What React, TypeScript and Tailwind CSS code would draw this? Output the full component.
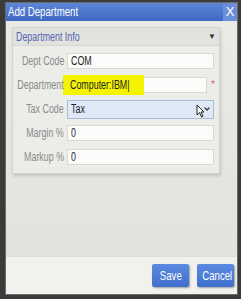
import { ChevronDown } from 'lucide-react'

const font = { fontFamily: '"Liberation Sans", Arial, sans-serif' }

type Field = { label: string; value: string; kind?: 'select' | 'highlight'; required?: boolean }

const fields: Field[] = [
  { label: 'Dept Code', value: 'COM' },
  { label: 'Department', value: 'Computer:IBM', kind: 'highlight', required: true },
  { label: 'Tax Code', value: 'Tax', kind: 'select' },
  { label: 'Margin %', value: '0' },
  { label: 'Markup %', value: '0' },
]

// the UI font in the picture is a narrow face, so squeeze Liberation Sans sideways
function Narrow({ children, origin = 'left' }: { children: React.ReactNode; origin?: 'left' | 'right' | 'center' }) {
  const o = origin === 'left' ? 'origin-left' : origin === 'right' ? 'origin-right' : 'origin-center'
  return <span className={`inline-block shrink-0 whitespace-nowrap scale-x-[0.74] ${o}`}>{children}</span>
}

function Row({ field }: { field: Field }) {
  return (
    <div className="flex items-center h-[16px]">
      <label className="w-[54px] pr-[3px] flex justify-end text-[12px] text-[#8a8a8a] shrink-0 whitespace-nowrap">
        <Narrow origin="right">{field.label}</Narrow>
      </label>
      {field.kind === 'select' ? (
        <div className="relative w-[147px] h-[19px] border border-[#a9bcdc] bg-[#dfe9f8] flex items-center pl-[3px] text-[12px] text-[#222]">
          <Narrow>Tax</Narrow>
          <ChevronDown className="absolute right-[2px] top-[4px] w-[8px] h-[8px] text-[#333]" strokeWidth={4} />
          {/* mouse pointer */}
          <svg className="absolute right-[8px] top-[3px]" width="9" height="14" viewBox="0 0 9 14">
            <path d="M1 1 L1 11 L3.5 8.5 L5.5 13 L7 12.3 L5 8 L8 8 Z" fill="#fff" stroke="#222" strokeWidth="1" />
          </svg>
        </div>
      ) : (
        <div
          className={`h-[16px] border border-[#d8d8d4] bg-[#fbfbf9] flex items-center pl-[3px] text-[12px] text-[#222] ${field.kind === 'highlight' ? 'w-[140px]' : 'w-[147px]'}`}
        >
          {field.kind === 'highlight' ? (
            <span className="bg-[#f4f400] -ml-[8px] pl-[7px] w-[81px] h-[20px] flex items-center">
              <Narrow>Computer:IBM|</Narrow>
            </span>
          ) : (
            <Narrow>{field.value}</Narrow>
          )}
        </div>
      )}
      {field.required && <span className="ml-[4px] text-[10px] text-[#e05a6a] leading-none">*</span>}
    </div>
  )
}

export default function App() {
  return (
    <div className="w-[241px] h-[299px] bg-[#3b3b3b] pt-[2px] pl-[5px] pr-[3px] pb-[4px]" style={font}>
      <div className="h-full flex flex-col border border-[#6a6a6a] bg-[#e8e8e4]">
        {/* Title bar */}
        <div className="h-[18px] flex items-center justify-between bg-gradient-to-b from-[#5e86d6] to-[#3f68c2]">
          <span className="pl-[2px] text-[13px] text-white">
            <Narrow>Add Department</Narrow>
          </span>
          <span className="w-[14px] h-[18px] flex items-center justify-center bg-[#6b8fd8] text-white text-[13px]">X</span>
        </div>

        {/* Body */}
        <div className="flex-1 pl-[6px] pr-[17px] pt-[6px] bg-gradient-to-b from-[#eaeae6] to-[#e2e2de]">
          <div className="border border-[#d2d2ce] bg-[#ecece8] shadow-[1px_2px_3px_rgba(0,0,0,0.15)] pb-[8px]">
            <div className="h-[18px] flex items-center justify-between px-[3px] bg-[#e2e2de] border-b border-[#d6d6d2]">
              <span className="text-[12px] text-[#5563b4]">
                <Narrow>Department Info</Narrow>
              </span>
              <span className="text-[8px] text-[#333]">▼</span>
            </div>
            <div className="pt-[7px] flex flex-col gap-[8px]">
              {fields.map(f => (
                <Row key={f.label} field={f} />
              ))}
            </div>
          </div>
        </div>

        {/* Footer */}
        <div className="h-[38px] border-t border-[#dcdcd8] bg-[#f1f1ee] flex items-center justify-end gap-[8px] pr-[3px]">
          <button className="w-[37px] h-[23px] rounded-[2px] bg-gradient-to-b from-[#5c8ae0] to-[#3f6fcc] text-white text-[13px] shadow-[1px_1px_2px_rgba(0,0,0,0.35)]">
            <Narrow origin="center">Save</Narrow>
          </button>
          <button className="w-[37px] h-[23px] rounded-[2px] bg-gradient-to-b from-[#5c8ae0] to-[#3f6fcc] text-white text-[13px] shadow-[1px_1px_2px_rgba(0,0,0,0.35)]">
            <Narrow origin="center">Cancel</Narrow>
          </button>
        </div>
      </div>
    </div>
  )
}
